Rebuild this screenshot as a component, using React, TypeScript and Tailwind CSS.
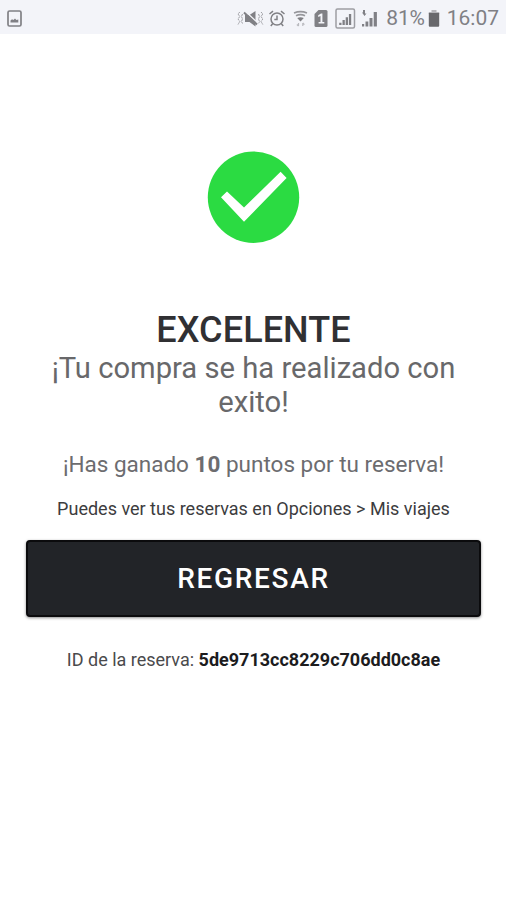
const StatusBar = () => {
  return (
    <header className="flex h-[34px] items-center bg-[#f3f4f9] pl-[7px] pr-[7px] pt-[3px] text-[#808085]">
      <svg width="15" height="18" viewBox="0 0 15 18" fill="none">
        <rect x="1" y="1" width="13" height="15" rx="1.5" stroke="currentColor" strokeWidth="1.7" />
        <path d="M3.5 12.5v-2L5 9.3l1.4.6L8 8.5l1.4 1.4 1.9-.4v3z" fill="currentColor" />
      </svg>

      {/* Muted with vibration */}
      <svg className="ml-auto" width="27" height="20" viewBox="0 0 27 20" fill="none">
        <path
          d="M2.8 3 1 5l1.8 2.5L1 10l1.8 2.5L1 15.5M5.5 5 4.5 7.5l1 2.5-1 2.5 1 2M24 3l1.8 2L24 7.5l1.8 2.5-1.8 2.5 1.8 3M21.5 5l1 2.5-1 2.5 1 2.5-1 2"
          stroke="currentColor"
          strokeDasharray="2.2 .6"
          opacity=".75"
        />
        <path d="M8 6h4.5L18.500 2v15.500L12.500 13H8z" fill="currentColor" />
        <path d="m8.500 2.500 13 12" stroke="#f3f4f9" strokeWidth="1.4" />
        <path d="m7 3.500 13 12" stroke="currentColor" strokeWidth="2" />
      </svg>

      {/* Alarm */}
      <svg className="ml-[4px]" width="18" height="20" viewBox="0 0 18 20" fill="none" stroke="currentColor" strokeWidth="1.5">
        <circle cx="9" cy="10" r="6" />
        <path d="M9 6.5v4H6.3M1.500 5 5 2.100M16.500 5 13 2.100M4.800 14.500l-2 2.500M13.200 14.500l2 2.500" />
      </svg>

      {/* Wifi */}
      <svg className="ml-[7px]" width="15" height="18" viewBox="0 0 15 18" fill="none" stroke="currentColor">
        <path d="M1 3q6.500-2.600 13 0M3 5.800q4.500-2.200 9 0" strokeWidth="1.7" opacity=".8" />
        <path d="M4.200 8q3.300-1.500 6.600 0l-3.300 3.600z" fill="currentColor" stroke="none" />
        <path d="M5.500 13v3M3.900 14.500l1.600 1.600M9.800 16v-3M9.800 13l1.600 1.600" strokeWidth="1.200" opacity=".5" />
      </svg>

      {/* SIM 1 */}
      <svg className="ml-[6px]" width="14" height="18" viewBox="0 0 14 18">
        <path d="M4.5 0H12a1.500 1.500 0 0 1 1.500 1.500v14A1.500 1.500 0 0 1 12 17H2A1.500 1.500 0 0 1 .5 15.500V4z" fill="currentColor" />
        <path d="M4.200 5.200 7 3.500h1.400V12h1.900v1.500H4.600V12h1.900V6.100l-2.300.9z" fill="#f3f4f9" />
      </svg>

      <svg className="ml-[7px]" width="21" height="21" viewBox="0 0 21 21">
        <rect x="1" y="1" width="18.5" height="19" rx="1.5" fill="none" stroke="currentColor" strokeWidth="1.5" opacity=".75" />
        <path d="M4.200 14.800h2.300V17H4.200zM7.500 12h2.300v5H7.500zM10.700 9.200H13V17h-2.300zM13.900 6h2.300v11h-2.300z" fill="currentColor" />
      </svg>

      <svg className="ml-[5px]" width="17" height="18" viewBox="0 0 17 18" fill="currentColor">
        <path d="M2 0h2v3.500h1.500l-2 2.500L1 2.500h1zM1 14h2.200v2.500H1zM4.500 11.500h2.800v5H4.500zM8.500 8h3v8.500h-3zM12.700 2h3.200v14.500h-3.200z" />
      </svg>

      <span className="ml-[8px] text-[21px] leading-none tracking-[-0.2px]">81%</span>
      <svg className="ml-[3px]" width="12" height="18" viewBox="0 0 12 18">
        <path d="M3.500 0h5v2h2.700v2H.8V2h2.700z" fill="#b5b5ba" />
        <path d="M.8 3h10.400v12.700a1 1 0 0 1-1 1H1.800a1 1 0 0 1-1-1z" fill="#68686c" />
      </svg>
      <span className="ml-[7px] text-[21px] leading-none">16:07</span>
    </header>
  );
};

const App = () => {
  return (
    <div className="min-h-[900px] bg-white font-[Roboto,sans-serif]">
      <StatusBar />

      <main className="flex flex-col items-center pl-[26px] pr-[25px] pt-[117px] text-center">
        <svg width="93" height="93" viewBox="0 0 93 93">
          <circle cx="46.5" cy="46.2" r="45.7" fill="#2bdb42" />
          <path d="m14 46.2 6-5.700 17 16 36.600-35.700 6 6.200L37 70.700z" fill="#fff" />
        </svg>

        <h1 className="mt-[65px] text-[36px] font-medium leading-[42px] tracking-[0.1px] text-[#303033]">EXCELENTE</h1>
        <p className="text-[29.2px] leading-[34px] text-[#68686a]">
          ¡Tu compra se ha realizado con
          <br />
          exito!
        </p>

        <p className="mt-[31px] text-[22.5px] leading-[28px] text-[#6c6c6f]">
          ¡Has ganado <strong className="font-bold">10</strong> puntos por tu reserva!
        </p>
        <p className="mt-[20px] text-[18px] leading-[22px] text-[#3c3c3e]">
          Puedes ver tus reservas en Opciones &gt; Mis viajes
        </p>

        <button className="mt-[20px] h-[77px] w-full rounded-[4px] border-2 border-[#0b0b0d] bg-[#222428] text-[28px] font-medium tracking-[1.7px] text-white shadow-[0_1px_3px_rgba(0,0,0,0.45)]">
          REGRESAR
        </button>

        <p className="mt-[32px] text-[18px] leading-[22px] text-[#4a4a4c]">
          ID de la reserva: <strong className="font-bold text-[#1c1c1e]">5de9713cc8229c706dd0c8ae</strong>
        </p>
      </main>
    </div>
  );
};

export default App;
